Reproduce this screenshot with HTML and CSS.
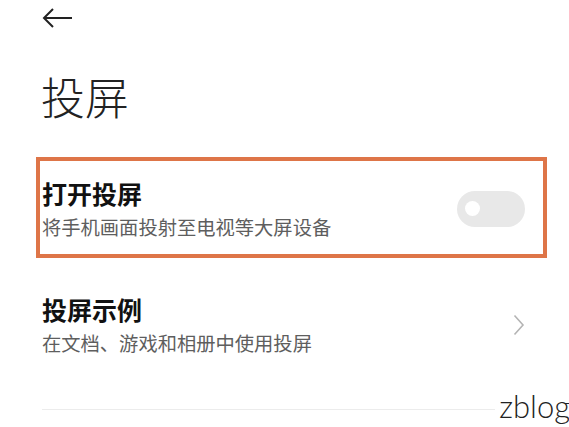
FILE: index.html
```html
<!DOCTYPE html>
<html lang="zh-CN">
<head>
  <meta charset="UTF-8" />
  <meta name="viewport" content="width=device-width, initial-scale=1" />
  <title>投屏</title>
  <link rel="stylesheet" href="styles.css">
</head>
<body>
  <div class="topbar">
    <svg class="back" width="32" height="22" viewBox="0 0 32 22">
      <path d="M31 11 H3 M12 2 L3 11 L12 20" fill="none" stroke="#222" stroke-width="2" />
    </svg>
  </div>

  <h1 class="page-title">投屏</h1>

  <div class="list">
    <!-- 打开投屏 -->
    <div class="row row-marked">
      <div class="row-text">
        <div class="row-title">打开投屏</div>
        <div class="row-sub">将手机画面投射至电视等大屏设备</div>
      </div>
      <div class="switch"><span class="knob"></span></div>
    </div>

    <!-- 投屏示例 -->
    <div class="row row-link">
      <div class="row-text">
        <div class="row-title">投屏示例</div>
        <div class="row-sub">在文档、游戏和相册中使用投屏</div>
      </div>
      <svg class="chevron" width="12" height="22" viewBox="0 0 12 22">
        <path d="M1.5 1.5 L10 11 L1.5 20.5" fill="none" stroke="#b4b4b4" stroke-width="1.6" />
      </svg>
    </div>

    <div class="divider"></div>
  </div>

  <div class="watermark">zblog</div>
</body>
</html>
```

FILE: styles.css
```css
body {
  margin: 0;
  width: 569px;
  height: 427px;
  overflow: hidden;
  background-color: #ffffff;
  font-family: "Noto Sans CJK SC", "Noto Sans", sans-serif;
  color: #111;
  position: relative;
}
.topbar {
  height: 36px;
  padding: 7px 0 0 41px;
  box-sizing: border-box;
}
.back {
  display: block;
}
.page-title {
  margin: 30px 0 0 41px;
  font-size: 44px;
  font-weight: 300;
  line-height: 60px;
  color: #222;
}
.list {
  margin-top: 31px;
  padding: 0 22px 0 36px;
}
.row {
  display: flex;
  align-items: center;
  justify-content: space-between;
  height: 101px;
  padding: 0 22px 0 6px;
  box-sizing: border-box;
}
.row-marked {
  border: 4px solid #de7548;
  padding: 2px 18px 0 2px;
}
.row-link {
  height: 130px;
  padding-top: 3px;
}
.row-title {
  font-size: 25px;
  font-weight: 700;
  line-height: 32px;
  color: #111;
}
.row-sub {
  font-size: 19.3px;
  line-height: 28px;
  color: #5e5e5e;
  margin-top: 4px;
}
.switch {
  width: 68px;
  height: 36px;
  border-radius: 18px;
  background-color: #e8e8e8;
  display: flex;
  align-items: center;
  padding-left: 8px;
  box-sizing: border-box;
}
.knob {
  width: 15px;
  height: 15px;
  border-radius: 50%;
  background-color: #ffffff;
}
.chevron {
  display: block;
}
.divider {
  margin: 21px -22px 0 6px;
  height: 1px;
  background-color: #ececec;
}
.watermark {
  position: absolute;
  right: -1px;
  bottom: 2px;
  font-family: "Lato", "DejaVu Sans", sans-serif;
  font-weight: 300;
  font-size: 31px;
  color: #222;
  background: #fff;
  padding-left: 4px;
}
```
